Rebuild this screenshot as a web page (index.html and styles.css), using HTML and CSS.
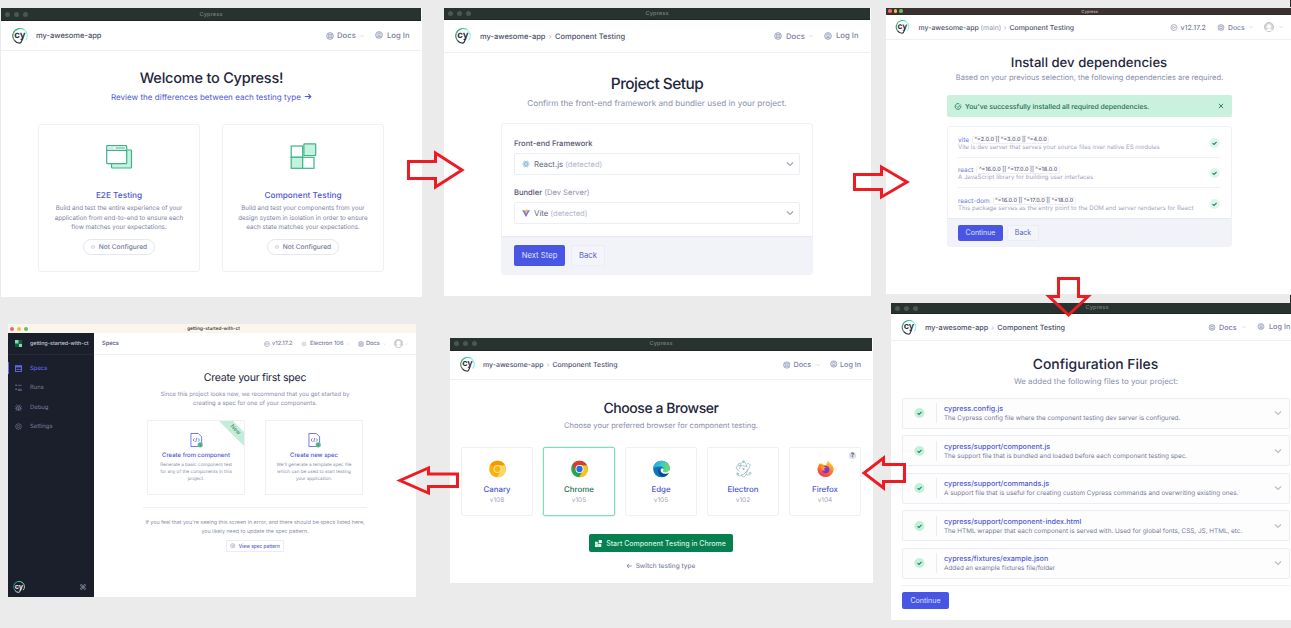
FILE: index.html
```html
<!DOCTYPE html>
<html lang="en">
<head>
<meta charset="utf-8">
<title>Cypress component testing setup flow</title>
<link rel="stylesheet" href="styles.css">
</head>
<body>
<svg class="defs" width="0" height="0" aria-hidden="true">
  <defs>
    <linearGradient id="ring" x1="0" y1="0" x2="1" y2="0.3"><stop offset="0" stop-color="#2e8f78"/><stop offset="0.6" stop-color="#3ccf9f"/><stop offset="1" stop-color="#8ff0d0"/></linearGradient>
    <linearGradient id="viteg" x1="0" y1="0" x2="0.6" y2="1"><stop offset="0" stop-color="#41a8ff"/><stop offset="1" stop-color="#a840e8"/></linearGradient>
    <linearGradient id="edgeg" x1="0" y1="0" x2="1" y2="0.3"><stop offset="0" stop-color="#1b9de2"/><stop offset="0.5" stop-color="#36c6d0"/><stop offset="1" stop-color="#66e060"/></linearGradient>
    <linearGradient id="foxg" x1="0.8" y1="0" x2="0.3" y2="1"><stop offset="0" stop-color="#ffe040"/><stop offset="0.45" stop-color="#ff8a1e"/><stop offset="1" stop-color="#f0305a"/></linearGradient>
    <symbol id="cy" viewBox="0 0 16 16">
      <path d="M2.400 12.400A7.200 7.200 0 0 1 1.200 5.500" fill="none" stroke="#46806f" stroke-width="1.200"/>
      <path d="M1.200 5.500A7.200 7.200 0 0 1 12.600 2.100" fill="none" stroke="url(#ring)" stroke-width="1.300"/>
      <path d="M12.600 2.100A7.200 7.200 0 0 1 13.600 12.300" fill="none" stroke="#9beeda" stroke-width="1.200"/>
      <path d="M2.400 12.400Q4.500 15.200 7.800 15.200Q9.300 14.800 10 12.200L10.800 10" fill="none" stroke="currentColor" stroke-width="1.300"/>
      <text x="7.800" y="10" text-anchor="middle" font-size="9.600" font-weight="700" fill="currentColor" letter-spacing="-.2">cy</text>
    </symbol>
    <symbol id="docs" viewBox="0 0 16 16"><g fill="none" stroke="currentColor" stroke-width="1.500"><circle cx="8" cy="8" r="6.800" fill="#e1e3ed"/><circle cx="8" cy="8" r="2.700" fill="#fff"/><path d="M3.200 3.200l3 3M12.800 3.200l-3 3M3.200 12.800l3-3M12.800 12.800l-3-3"/></g></symbol>
    <symbol id="user" viewBox="0 0 16 16"><g fill="none" stroke="currentColor" stroke-width="1.500"><circle cx="8" cy="8" r="6.800" fill="#e1e3ed"/><circle cx="8" cy="6.500" r="2.500" fill="#fff"/><path d="M3.500 12.500Q8 8.500 12.500 12.500"/></g></symbol>
    <symbol id="ver" viewBox="0 0 16 16"><g fill="none" stroke="currentColor" stroke-width="1.600"><circle cx="8" cy="8" r="6.800"/><path d="M7.500 6A2.200 2.200 0 1 0 7.500 10M8.500 6l1.500 3.500L11.800 6"/></g></symbol>
    <symbol id="down" viewBox="0 0 8 8"><path d="M1 2.500L4 5.500 7 2.500" fill="none" stroke="currentColor" stroke-width="1.200"/></symbol>
    <symbol id="check" viewBox="0 0 12 12"><circle cx="6" cy="6" r="6" fill="var(--disc)"/><path d="M3.600 6.100L5.400 7.700 8.500 4.600" fill="none" stroke="#1b8a5c" stroke-width="1.400"/></symbol>
    <symbol id="avatar" viewBox="0 0 12 12"><circle cx="6" cy="6" r="5.500" fill="#d4d4d8" stroke="#c0c0c6" stroke-width="1"/><circle cx="6" cy="5.300" r="2.700" fill="#fff"/><path d="M2.300 9.800Q3.500 8 6 8T9.700 9.800Q6 12 2.300 9.800z" fill="#fff"/></symbol>
    <symbol id="gear" viewBox="0 0 16 16"><g fill="none" stroke="currentColor" stroke-width="1.500"><path d="M8 1.200l1.800 1.500 2.300-.2.600 2.200 2 1.200L13.800 8l.9 2.100-2 1.200-.6 2.200-2.300-.2L8 14.800l-1.800-1.500-2.300.2-.6-2.200-2-1.200L2.200 8l-.9-2.100 2-1.200.6-2.200 2.300.2z"/><circle cx="8" cy="8" r="2.500"/></g></symbol>
    <symbol id="file" viewBox="0 0 14 16"><path d="M1 1h8l3.500 3.500V15H1z" fill="#fff" stroke="#6a72ec" stroke-width="1"/><path d="M4.800 6.200L3.300 8l1.500 1.800M8.700 6.200L10.200 8 8.700 9.800M7.300 5.800L6.200 10.200" fill="none" stroke="#5a63ea" stroke-width=".8"/><circle cx="11" cy="13.200" r="2.800" fill="#62bd93"/><path d="M11 11.700v3" stroke="#26785a" stroke-width=".8"/></symbol>
    <symbol id="atom" viewBox="0 0 20 20"><g fill="none" stroke="currentColor"><ellipse cx="10" cy="10" rx="8.600" ry="3.400"/><ellipse cx="10" cy="10" rx="8.600" ry="3.400" transform="rotate(60 10 10)"/><ellipse cx="10" cy="10" rx="8.600" ry="3.400" transform="rotate(120 10 10)"/></g><circle cx="10" cy="10" r="1.300" fill="currentColor"/></symbol>
    <symbol id="electron" viewBox="0 0 20 20"><g fill="none" stroke="currentColor" stroke-width=".9"><path d="M14.500 7.500C9 5.500 2.500 5.300 1.500 7.500 1 8.800 2.500 10.800 5 12.700"/><path d="M14.500 4C18 3.500 18.500 5.500 17 8.500 14.800 13 8.500 18 5 18 3.300 18 2.900 16.500 3.600 14.500" transform="rotate(-2 10 10)"/><path d="M5.500 10C6.300 4.500 8.300 1 10 1c1.600 0 3 2.500 3.800 6"/><path d="M7 16.300C8 18.300 9 19.200 10 19.200c2.200 0 4.300-4 4.500-9"/><path d="M3.700 5.500C3.500 3.500 4.500 2.800 6.500 3.500M13 16.300c2 1 3.700 1 4.300.2"/><circle cx="17.800" cy="15" r="1.100"/><circle cx="3" cy="15.800" r="1.100"/><circle cx="10" cy="1.500" r="1"/></g><circle cx="10" cy="10" r="1.200" fill="currentColor"/></symbol>
  </defs>
</svg>

<main class="board">

  <section class="win w1">
    <div class="bar"><i></i><i></i><i></i><span>Cypress</span></div>
    <header class="head">
      <svg class="logo"><use href="#cy"/></svg><b class="crumb">my-awesome-app</b>
      <nav class="tools"><svg class="ic"><use href="#docs"/></svg><span class="docs">Docs</span><svg class="chev"><use href="#down"/></svg><svg class="ic up"><use href="#user"/></svg><span class="login up">Log In</span></nav>
    </header>
    <h1>Welcome to Cypress!</h1>
    <p class="sub link">Review the differences between each testing type <svg viewBox="0 0 10 8"><path d="M1 4h7.500M5.500 1l3 3-3 3" fill="none" stroke="currentColor" stroke-width="1.400"/></svg></p>
    <div class="types">
      <article>
        <svg class="pic" viewBox="0 0 26 26"><g stroke="#3cb487" stroke-width="1.200"><rect x="5.500" y="7" width="20" height="18" rx=".8" fill="#c4f2de"/><rect x=".7" y="2.700" width="20" height="18" rx=".8" fill="#fff"/><path d="M.7 7.300h20M9.500 5h9.500" fill="none"/><path d="M2.500 5h5" stroke-dasharray="1 1" fill="none"/></g></svg>
        <h2>E2E Testing</h2>
        <p>Build and test the entire experience of your<br>application from end-to-end to ensure each<br>flow matches your expectations.</p>
        <span class="pill"><i></i>Not Configured</span>
      </article>
      <article>
        <svg class="pic" viewBox="-.5 0 26 26"><g stroke="#3cb487" stroke-width="1.200"><rect x=".7" y="3" width="11.500" height="11.300" fill="#fff"/><rect x=".7" y="14.300" width="11.500" height="11" fill="#c4f2de"/><rect x="12.200" y="14.300" width="11.300" height="11" fill="#fff"/><rect x="13.400" y=".8" width="11.800" height="11.700" rx=".6" fill="#c4f2de"/></g></svg>
        <h2>Component Testing</h2>
        <p>Build and test your components from your<br>design system in isolation in order to ensure<br>each state matches your expectations.</p>
        <span class="pill"><i></i>Not Configured</span>
      </article>
    </div>
  </section>

  <section class="win w2">
    <div class="bar"><i></i><i></i><i></i><span>Cypress</span></div>
    <header class="head">
      <svg class="logo"><use href="#cy"/></svg><b class="crumb">my-awesome-app</b><em class="sep">›</em><b class="crumb2">Component Testing</b>
      <nav class="tools"><svg class="ic"><use href="#docs"/></svg><span class="docs">Docs</span><svg class="chev"><use href="#down"/></svg><svg class="ic up"><use href="#user"/></svg><span class="login up">Log In</span></nav>
    </header>
    <h1>Project Setup</h1>
    <p class="sub">Confirm the front-end framework and bundler used in your project.</p>
    <div class="panel">
      <div class="fields">
        <label>Front-end Framework</label>
        <div class="select"><svg class="mark react"><use href="#atom"/></svg><span>React.js</span><small>(detected)</small><svg class="caret"><use href="#down"/></svg></div>
        <label>Bundler <span>(Dev Server)</span></label>
        <div class="select"><svg class="mark" viewBox="0 0 16 16"><path d="M0 2L8 16 16 2 8 3.500z" fill="url(#viteg)"/><path d="M6 1.500l5-1-1 5 1.500-.3-4 7 .8-5-2 .4z" fill="#ffc628"/></svg><span>Vite</span><small>(detected)</small><svg class="caret"><use href="#down"/></svg></div>
      </div>
      <footer><button class="primary">Next Step</button><button class="plain">Back</button></footer>
    </div>
  </section>

  <section class="win w3">
    <div class="bar lit"><i></i><i></i><i></i><span>Cypress</span></div>
    <header class="head">
      <svg class="logo"><use href="#cy"/></svg><b class="crumb">my-awesome-app <span>(main)</span></b><em class="sep">›</em><b class="crumb2">Component Testing</b>
      <nav class="tools"><svg class="ic"><use href="#ver"/></svg><span class="ver">v12.17.2</span><svg class="ic"><use href="#docs"/></svg><span class="docs">Docs</span><svg class="chev"><use href="#down"/></svg><svg class="face"><use href="#avatar"/></svg><svg class="chev"><use href="#down"/></svg></nav>
    </header>
    <h1>Install dev dependencies</h1>
    <p class="sub">Based on your previous selection, the following dependencies are required.</p>
    <div class="alert"><svg class="ok" viewBox="0 0 10 10"><g fill="none" stroke="#1c7a55" stroke-width="1.200"><path d="M9 4.200A4.100 4.100 0 1 1 6.800 1.300"/><path d="M3.200 4.700l1.700 1.700L8.800 2.200"/></g></svg><span>You've successfully installed all required dependencies.</span><svg class="x" viewBox="0 0 8 8"><path d="M1.200 1.200l5.600 5.600M6.800 1.200L1.200 6.800" fill="none" stroke="#1c7a55" stroke-width="1.200"/></svg></div>
    <div class="panel">
      <ul>
        <li><div><strong>vite</strong><code>^=2.0.0 || ^=3.0.0 || ^=4.0.0</code><p>Vite is dev server that serves your source files over native ES modules</p></div><svg class="tick"><use href="#check"/></svg></li>
        <li><div><strong>react</strong><code>^=16.0.0 || ^=17.0.0 || ^=18.0.0</code><p>A JavaScript library for building user interfaces</p></div><svg class="tick"><use href="#check"/></svg></li>
        <li><div><strong>react-dom</strong><code>^=16.0.0 || ^=17.0.0 || ^=18.0.0</code><p>This package serves as the entry point to the DOM and server renderers for React</p></div><svg class="tick"><use href="#check"/></svg></li>
      </ul>
      <footer><button class="primary">Continue</button><button class="plain">Back</button></footer>
    </div>
  </section>

  <section class="win w4">
    <div class="bar"><i></i><i></i><i></i><span>Cypress</span></div>
    <header class="head">
      <svg class="logo"><use href="#cy"/></svg><b class="crumb">my-awesome-app</b><em class="sep">›</em><b class="crumb2">Component Testing</b>
      <nav class="tools"><svg class="ic"><use href="#docs"/></svg><span class="docs">Docs</span><svg class="chev"><use href="#down"/></svg><svg class="ic up"><use href="#user"/></svg><span class="login up">Log In</span></nav>
    </header>
    <h1>Configuration Files</h1>
    <p class="sub">We added the following files to your project:</p>
    <ul class="files">
      <li><svg class="tick"><use href="#check"/></svg><div><h3>cypress.config.js</h3><p>The Cypress config file where the component testing dev server is configured.</p></div><svg class="caret"><use href="#down"/></svg></li>
      <li><svg class="tick"><use href="#check"/></svg><div><h3>cypress/support/component.js</h3><p>The support file that is bundled and loaded before each component testing spec.</p></div><svg class="caret"><use href="#down"/></svg></li>
      <li><svg class="tick"><use href="#check"/></svg><div><h3>cypress/support/commands.js</h3><p>A support file that is useful for creating custom Cypress commands and overwriting existing ones.</p></div><svg class="caret"><use href="#down"/></svg></li>
      <li><svg class="tick"><use href="#check"/></svg><div><h3>cypress/support/component-index.html</h3><p>The HTML wrapper that each component is served with. Used for global fonts, CSS, JS, HTML, etc.</p></div><svg class="caret"><use href="#down"/></svg></li>
      <li><svg class="tick"><use href="#check"/></svg><div><h3>cypress/fixtures/example.json</h3><p>Added an example fixtures file/folder</p></div><svg class="caret"><use href="#down"/></svg></li>
    </ul>
    <footer><button class="primary">Continue</button></footer>
  </section>

  <section class="win w5">
    <div class="bar"><i></i><i></i><i></i><span>Cypress</span></div>
    <header class="head">
      <svg class="logo"><use href="#cy"/></svg><b class="crumb">my-awesome-app</b><em class="sep">›</em><b class="crumb2">Component Testing</b>
      <nav class="tools"><svg class="ic"><use href="#docs"/></svg><span class="docs">Docs</span><svg class="chev"><use href="#down"/></svg><svg class="ic up"><use href="#user"/></svg><span class="login up">Log In</span></nav>
    </header>
    <h1>Choose a Browser</h1>
    <p class="sub">Choose your preferred browser for component testing.</p>
    <div class="browsers">
      <article><svg viewBox="0 0 20 20"><circle cx="10" cy="10" r="9.800" fill="#f8b10a"/><path d="M10 5.500h8.700A9.800 9.800 0 0 1 9.500 19.800L14 12z" fill="#ffd560"/><path d="M1.600 5A9.800 9.800 0 0 1 18.700 5.500H10L6 8z" fill="#f29a00"/><circle cx="10" cy="10" r="4.600" fill="#ffe7a0"/><circle cx="10" cy="10" r="3.600" fill="#f7b21b"/></svg><h3>Canary</h3><p>v108</p></article>
      <article class="on"><svg viewBox="0 0 20 20"><circle cx="10" cy="10" r="9.800" fill="#2ba24c"/><path d="M10 5.500h8.700A9.800 9.800 0 0 1 9.500 19.800L14 12z" fill="#fcc31e"/><path d="M1.600 5A9.800 9.800 0 0 1 18.700 5.500H10L6 12z" fill="#dd3b2d"/><circle cx="10" cy="10" r="4.700" fill="#fff"/><circle cx="10" cy="10" r="3.700" fill="#1a70e6"/></svg><h3>Chrome</h3><p>v105</p></article>
      <article><svg viewBox="0 0 20 20"><circle cx="10" cy="10" r="9.800" fill="#1273bd"/><path d="M.3 9.500A9.800 9.800 0 0 1 19.800 9C20 12.500 17 14 14 13.700c-2-.2-2.700-1.200-1.700-2.200C13.500 9.500 11.500 7.300 8.500 7.200 4.500 7 1 8.500.3 9.500z" fill="url(#edgeg)"/><path d="M7.500 9C4.500 12 7 18.500 12.500 19.200 15.500 18.500 17.500 16.500 18.600 14.700 14 17 8 15.500 8.500 10.500z" fill="#0d4a96"/><path d="M12.300 11.500c-1 1-.3 2 1.700 2.200 2.300.2 4.500-.5 5.800-2.700L20 13.500 18.600 14.700C14.500 16.500 9 15.500 9 11.500c0-1.500 1-2.500 2-2.500 1.200 0 2 1.500 1.300 2.500z" fill="#fff"/></svg><h3>Edge</h3><p>v105</p></article>
      <article><svg class="electron"><use href="#electron"/></svg><h3>Electron</h3><p>v102</p></article>
      <article><svg viewBox="0 0 20 20"><path d="M1.500 7C1.800 5 3 3.500 3.800 3l.4 1.700 2-1.500L6.500 5 11 5.200C11 3 12.500 1 14 0c0 2.500 1.500 3 3 4.500 2 2 2.800 4.500 2.500 7A9.600 9.600 0 0 1 .5 11c0-1.500.3-3 1-4z" fill="url(#foxg)"/><circle cx="10.300" cy="10.800" r="4.200" fill="#8434d8"/><path d="M4 7.500c2-1.500 5-.8 6.500.8L8.500 9.500 9 12c-2 .3-4.500-1.500-5-4.500z" fill="#ff9a28"/></svg><h3>Firefox</h3><p>v104</p><span class="help">?</span></article>
    </div>
    <button class="start"><svg viewBox="0 0 10 10"><path d="M0 2.500h4v3h5V10H0z" fill="#d7f5e6"/><rect x="5.300" width="4.500" height="4.300" fill="#fff"/><path d="M4.500 6v4M0 6h4" stroke="#5cb891" stroke-width=".6"/></svg>Start Component Testing in Chrome</button>
    <p class="switch"><svg viewBox="0 0 8 8"><path d="M7.500 4h-6M4 1.200L1.200 4 4 6.800" fill="none" stroke="currentColor" stroke-width="1.200"/></svg>Switch testing type</p>
  </section>

  <section class="win w6">
    <div class="bar lit"><i></i><i></i><i></i><span>getting-started-with-ct</span></div>
    <div class="split">
      <aside>
        <div class="proj"><svg viewBox="0 0 8 8"><rect width="8" height="8" fill="#185a3b"/><rect width="4" height="4" fill="#7be0ac"/><rect x="4.500" y="4.500" width="3.500" height="3.500" fill="#7be0ac"/></svg><b>getting-started-with-ct</b></div>
        <a class="on"><svg viewBox="0 0 8 8"><rect x=".6" y=".8" width="6.800" height="6.600" fill="none" stroke="#6470f3"/><path d="M.6 2h6.800" stroke="#6470f3" stroke-width="1.500"/><path d="M2 5h1M4 5h1M5.800 5h.7" stroke="#b8bdf8"/></svg>Specs</a>
        <a><svg viewBox="0 0 8 8"><path d="M.5 1.500h1.500M.5 6h1.500" stroke="currentColor" stroke-width="1.600"/><path d="M3.200 1.500h4.500M3.200 6h4.500M3.200 7.300h4.500" stroke="currentColor" stroke-width=".8"/></svg>Runs</a>
        <a><svg viewBox="0 0 8 8"><g fill="none" stroke="currentColor" stroke-width=".8"><ellipse cx="4" cy="4.800" rx="1.900" ry="2.600"/><path d="M2.800 2.500L2 .7M5.200 2.500L6 .7M2 4L.4 2.800M6 4l1.600-1.200M2 5H.2M6 5h1.800M2.300 6.200L.8 7.600M5.700 6.200l1.500 1.400M4 3.500v3.800"/></g></svg>Debug</a>
        <a><svg><use href="#gear"/></svg>Settings</a>
        <div class="foot"><svg class="logo"><use href="#cy"/></svg><svg class="cmd" viewBox="0 0 8 8"><path d="M3 1.800A1.200 1.200 0 1 0 1.800 3H6.200A1.200 1.200 0 1 0 5 1.800V6.200A1.200 1.200 0 1 0 6.200 5H1.800A1.200 1.200 0 1 0 3 6.200z" fill="none" stroke="#8f94ab" stroke-width=".9"/></svg></div>
      </aside>
      <div class="page">
        <header class="head"><b class="crumb">Specs</b>
          <nav class="tools"><svg class="ic"><use href="#ver"/></svg><span class="ver">v12.17.2</span><svg class="ic pale"><use href="#atom"/></svg><span class="elec">Electron 106</span><svg class="chev"><use href="#down"/></svg><svg class="ic"><use href="#docs"/></svg><span class="docs">Docs</span><svg class="chev"><use href="#down"/></svg><svg class="face"><use href="#avatar"/></svg><svg class="chev"><use href="#down"/></svg></nav>
        </header>
        <h1>Create your first spec</h1>
        <p class="sub">Since this project looks new, we recommend that you get started by<br>creating a spec for one of your components.</p>
        <div class="options">
          <article><span class="ribbon">New</span><svg><use href="#file"/></svg><h3>Create from component</h3><p>Generate a basic component test<br>for any of the components in this<br>project.</p></article>
          <article><svg><use href="#file"/></svg><h3>Create new spec</h3><p>We'll generate a template spec file<br>which can be used to start testing<br>your application.</p></article>
        </div>
        <p class="note">If you feel that you're seeing this screen in error, and there should be specs listed here,<br>you likely need to update the spec pattern.</p>
        <button class="pattern"><svg><use href="#gear"/></svg>View spec pattern</button>
      </div>
    </div>
  </section>

  <i class="edge e1"></i><i class="edge e2"></i>
  <svg class="arrows" width="1291" height="628" viewBox="0 0 1291 628" fill="none" stroke="#ed1c24" stroke-width="3">
    <path d="M408.500 161.500H435.500V153L462 170 435.500 187V178.500H408.500z"/>
    <path d="M854.500 174.500H881.500V167L907 182 881.500 197V189.500H854.500z"/>
    <path d="M1058.500 278.500H1078.500V296.500H1088L1068.500 315 1049 296.500H1058.500z"/>
    <path d="M904.500 464.500H883.500V458L864 473 883.500 488V481.500H904.500z"/>
    <path d="M457.500 474H428.500V468L400 480.500 428.500 493V486.500H457.500z"/>
  </svg>
</main>
</body>
</html>
```
FILE: styles.css
```css
* { box-sizing: border-box; margin: 0; padding: 0; }
body { background: #ebebeb; font-family: Inter, "Liberation Sans", sans-serif; text-rendering: geometricPrecision; color: #2e3247; overflow: hidden; }
.defs { position: absolute; }
.board { position: relative; width: 1291px; height: 628px; overflow: hidden; }
.board svg { display: block; flex: none; overflow: visible; }
button { font: inherit; border: 0; }
ul { list-style: none; }
h1, h2, h3, b, strong { font-weight: 500; }
h1, h2, h3, p, span, b, label, button, strong, code { white-space: nowrap; }

/* windows placed on the canvas */
.win { position: absolute; background: #fff; display: flex; flex-direction: column; color: #5a5f7a; }
.w1 { left: 1px; top: 8px; width: 421px; height: 289px; }
.w2 { left: 444px; top: 8px; width: 427px; height: 288px; }
.w3 { left: 886px; top: 8px; width: 405px; height: 286px; }
.w4 { left: 891px; top: 303px; width: 400px; height: 317px; }
.w5 { left: 450px; top: 338px; width: 423px; height: 245px; }
.w6 { left: 8px; top: 324px; width: 408px; height: 273px; }

.bar { flex: none; display: flex; align-items: center; gap: 4px; padding-left: 4px; height: 12px; margin-right: 1px; background: #28322f; border-bottom: 1px solid #1f2725; }
.bar i { width: 5px; height: 5px; border-radius: 50%; background: #4c5654; }
.bar span { flex: 1; text-align: center; margin-right: 27px; margin-left: -4px; font-size: 5.600px; font-weight: 600; color: #6e7875; letter-spacing: .1px; }
.bar.lit i:nth-child(1) { background: #ee6a5f; }
.bar.lit i:nth-child(2) { background: #f5bd4f; }
.bar.lit i:nth-child(3) { background: #5fc454; }

.head { flex: none; display: flex; align-items: center; border-bottom: 1px solid #eeeff4; margin-right: 1px; font-size: 7.500px; color: #4b5069; }
.head .logo { width: 16px; height: 16px; color: #2b3243; }
.crumb, .crumb2 { font-weight: 500; }
.crumb span { font-weight: 400; color: #9095ad; }
.sep { font-style: normal; text-align: center; color: #b5b8c8; }
.tools { margin-left: auto; display: flex; align-items: center; color: #7b80a0; font-weight: 500; }
.ic { width: 8px; height: 8px; color: #9398b6; }
.chev { width: 4px; height: 4px; color: #c3c6d4; }
.up { position: relative; top: -.4px; }

h1 { color: #23263b; text-align: center; }
.sub { text-align: center; color: #8a8fab; }
.primary { background: #4956e3; color: #dfe2fb; border-radius: 2px; }
.plain { color: #5a62c8; border: 1px solid #ebecf4; border-radius: 2px; background: #f4f5fa; }

/* testing type */
.w1 .bar { height: 13px; }
.w1 .bar span { padding-top: 1px; }
.w1 .head { height: 30px; padding-left: 11px; padding-right: 12px; }
.w1 .crumb { margin-left: 8px; font-size: 7.500px; }
.w1 .tools .docs { width: 19px; margin: 0 4px 0 3px; font-size: 7.700px; }
.w1 .tools .chev { margin-right: 11px; }
.w1 .login { margin-left: 4px; width: 22px; font-size: 7.700px; }
.w1 h1 { margin-top: 18px; line-height: 20px; font-size: 14.500px; letter-spacing: -.22px; }
.w1 .sub { margin-top: 1.500px; line-height: 12px; font-size: 8.050px; color: #4f59d6; display: flex; align-items: center; justify-content: center; gap: 3px; }
.w1 .sub svg { width: 8px; height: 7px; }
.types { display: flex; gap: 22px; padding-left: 37px; margin-top: 21.500px; }
.types article { width: 162px; height: 148px; border: 1px solid #eff0f5; border-radius: 3px; display: flex; flex-direction: column; align-items: center; text-align: center; padding-top: 18px; }
.pic { width: 26px; height: 26px; }
.types h2 { margin-top: 19.500px; font-size: 8.250px; line-height: 12px; color: #4d56cf; }
.types p { margin-top: 3.500px; font-size: 6.220px; line-height: 9.500px; color: #7c81a0; }
.pill { margin-top: 6px; height: 16px; width: 72px; border: 1px solid #e6e7f0; border-radius: 8px; display: flex; align-items: center; justify-content: center; gap: 4px; font-size: 6.600px; font-weight: 500; color: #73789a; }
.pill i { width: 4px; height: 4px; border-radius: 50%; border: 1px solid #d6d8e6; background: #eceef6; }

/* project setup */
.w2 .head { height: 33px; padding-left: 11px; padding-right: 12px; }
.w2 .crumb { margin-left: 9px; }
.w2 .sep { width: 9.500px; }
.w2 .docs { width: 19px; margin: 0 4px 0 4px; font-size: 7.700px; }
.w2 .tools .chev { margin-right: 11px; }
.w2 .login { margin-left: 4px; width: 22px; font-size: 7.700px; }
.w2 h1 { margin-top: 21px; margin-right: 1px; line-height: 20px; font-size: 15.400px; letter-spacing: -.5px; }
.w2 .sub { margin-top: 2.500px; margin-right: 1px; line-height: 12px; font-size: 8.200px; letter-spacing: .01px; }
.panel { border: 1px solid #f0f1f6; border-radius: 3px; overflow: hidden; }
.panel footer { display: flex; background: #f2f3f9; border-top: 1px solid #e7e9f4; }
.w2 .panel { margin: 14.500px 0 0 57px; width: 312px; height: 152px; display: flex; flex-direction: column; }
.fields { height: 112px; padding: 13px 12px 0; }
.w2 label { display: block; height: 16px; line-height: 13px; font-size: 7.600px; font-weight: 500; color: #50556e; }
.w2 label span { font-weight: 400; color: #9095ad; }
.select { display: flex; align-items: center; height: 22px; border: 1px solid #eceef4; border-radius: 2px; margin-bottom: 11px; padding: 0 5px 0 7px; font-size: 7.800px; color: #5a5f7a; }
.mark { width: 8px; height: 8px; margin-right: 4px; }
.react { color: #4f9ad6; }
.select small { font-size: 7.600px; color: #b3b7c9; margin-left: 2px; }
.caret { width: 8px; height: 8px; color: #a2a6bd; margin-left: auto; }
.w2 footer { flex: 1; padding: 8px 12px; gap: 6px; font-size: 7.700px; }
.w2 .primary { width: 51px; height: 21px; }
.w2 .plain { width: 34px; height: 21px; }

/* dependencies */
.w3 .bar { height: 7px; background: #3b3230; border-bottom-color: #342c2a; gap: 2px; padding-left: 2px; margin-right: 0; }
.w3 .bar i { width: 3.500px; height: 3.500px; }
.w3 .bar span { font-size: 4px; color: #b5afad; margin-right: 12px; }
.w3 .head { height: 25px; padding-left: 9px; padding-right: 8px; margin-right: 0; font-size: 6.920px; }
.w3 .logo { width: 15px; height: 14px; }
.w3 .crumb { margin-left: 8.500px; width: 82px; }
.w3 .sep { width: 9px; }
.w3 .ver { width: 27px; margin: 0 9.500px 0 3px; font-size: 7px; }
.w3 .docs { width: 17px; margin: 0 4px 0 3px; font-size: 6.800px; }
.w3 .ic { height: 7px; }
.w3 .face { width: 12px; height: 10px; margin: 0 4px 0 10px; }
.w3 h1 { margin-top: 14px; margin-left: 1px; line-height: 19px; font-size: 13.150px; }
.w3 .sub { margin-right: -2px; line-height: 10px; font-size: 7.520px; }
.alert { display: flex; align-items: center; margin: 12px 0 0 61px; width: 285px; height: 22px; border-radius: 2px; background: #caf0de; padding: 0 8px 0 7px; color: #24694d; font-size: 6.880px; font-weight: 500; }
.alert .ok { width: 8px; height: 7px; margin-right: 3px; }
.alert .x { width: 6px; height: 6px; margin-left: auto; }
.w3 .panel { margin: 9px 0 0 61px; width: 285px; height: 121px; }
.w3 ul { padding: 0 11px 0 10px; height: 91px; }
.w3 li { display: flex; align-items: center; justify-content: space-between; height: 30px; border-bottom: 1px solid #eff0f4; padding-top: 3px; }
.w3 li:first-child { height: 31px; }
.w3 li:last-child { border: 0; }
.w3 strong { font-size: 6.400px; color: #6b74e4; font-weight: 400; margin-right: 3px; }
.w3 li div { line-height: 8px; display: flex; flex-wrap: wrap; width: 245px; align-items: center; }
.w3 code { font: 500 5.500px/6px Inter, sans-serif; color: #5c6078; border: 1px solid #eeeff4; border-radius: 2px; padding: 0 1.500px; height: 8px; }
.w3 li p { width: 100%; font-size: 6.080px; line-height: 8px; color: #a2a6bd; }
.tick { width: 11px; height: 10px; --disc: #dcf6ea; }
.w3 li .tick { margin-bottom: 2px; }
.w3 footer { height: 30px; padding: 5.500px 10px; gap: 4px; font-size: 7px; }
.w3 .primary { width: 45px; height: 16px; }
.w3 .plain { width: 32px; height: 16px; }

/* configuration files */
.w4 .bar { height: 11px; margin-right: 0; }
.w4 .bar span { margin-right: 15px; }
.w4 .head { height: 27px; padding-left: 10px; margin-right: 0; font-size: 7.250px; }
.w4 .crumb { margin-left: 8px; }
.w4 .sep { width: 9px; }
.w4 .logo { height: 15px; }
.w4 .ic { height: 7px; }
.w4 .docs { width: 19px; margin: 0 4px 0 3px; }
.w4 .tools .chev { margin-right: 11px; }
.w4 .login { margin-left: 4px; width: 22px; }
.w4 h1 { margin-top: 14px; margin-left: 9px; line-height: 21px; font-size: 13.900px; }
.w4 .sub { margin-left: 10px; line-height: 10px; font-size: 7.900px; }
.files { margin: 11.500px 1px 0 11px; display: flex; flex-direction: column; gap: 6.600px; }
.files li { height: 31px; display: flex; align-items: center; border: 1px solid #ecedf4; border-radius: 2px; background: #fdfdfe; padding: 0 7px 0 11px; }
.files .tick { --disc: #c3f0dc; }
.files .caret { color: #b9bccd; }
.files div { margin-left: 11px; border-left: 1px solid #ebecf2; padding: 1px 0 0 7px; height: 20px; }
.files h3 { font-size: 7.200px; line-height: 10px; color: #4f5ad4; }
.files p { font-size: 6.370px; line-height: 9px; color: #767b95; }
.w4 footer { margin: 6px 1px 0 11px; border-top: 1px solid #eeeff3; padding-top: 6.500px; font-size: 7.100px; line-height: 17px; }
.w4 .primary { display: block; width: 47px; height: 17px; }

/* browsers */
.w5 .bar { height: 12.500px; }
.w5 .head { height: 29px; padding-left: 10px; padding-right: 11px; font-size: 6.950px; }
.w5 .logo { width: 15px; height: 15px; }
.w5 .crumb { margin-left: 8px; }
.w5 .sep { width: 9px; }
.w5 .docs { width: 18px; margin: 0 4px 0 3px; font-size: 7.200px; }
.w5 .tools .chev { margin-right: 10px; }
.w5 .login { margin-left: 3px; width: 21px; font-size: 7.200px; }
.w5 .ic { width: 7.500px; }
.w5 h1 { margin-top: 19px; margin-right: 1px; line-height: 20px; font-size: 14px; letter-spacing: -.45px; }
.w5 .sub { margin-top: 1px; margin-right: 1px; line-height: 12px; font-size: 7.500px; }
.browsers { display: flex; gap: 10px; margin: 15.500px 0 0 11px; }
.browsers article { position: relative; width: 72px; height: 69px; border: 1px solid #eff0f5; border-radius: 2px; padding-top: 12px; text-align: center; }
.browsers svg { width: 17px; height: 18px; margin: 0 auto; }
.browsers .on { border-color: #86dbb8; box-shadow: 0 0 0 .5px #b9eed8; }
.browsers h3 { margin-top: 5px; line-height: 12px; font-size: 7.900px; color: #4d56cf; }
.browsers .on h3 { color: #22704f; }
.browsers p { line-height: 10px; font-size: 6.500px; color: #a0a4bb; }
.browsers .electron { color: #86b5b9; }
.help { position: absolute; right: 4px; top: 4px; width: 7px; height: 7px; border-radius: 50%; background: #d9dbe8; font-size: 6px; line-height: 7px; font-weight: 700; color: #4b5069; }
.start { align-self: center; display: flex; align-items: center; justify-content: center; gap: 4px; margin: 18px 2px 0 0; width: 144px; height: 18px; background: #07804f; color: #d3efe2; border-radius: 2px; font-size: 7px; font-weight: 500; }
.start svg { width: 7px; height: 7px; }
.switch { display: flex; justify-content: center; align-items: center; gap: 4px; margin: 9px 2px 0 0; line-height: 10px; font-size: 6.500px; font-weight: 500; color: #7c81a0; }
.switch svg { width: 6px; height: 6px; }

/* first spec */
.w6 .bar { height: 9px; background: #fbf5ed; border: 0; gap: 3px; padding-left: 2px; margin-right: 0; }
.w6 .bar i { width: 4px; height: 4px; }
.w6 .bar span { font-size: 4.700px; color: #4b4644; font-weight: 600; letter-spacing: 0; margin-right: 16px; }
.split { flex: 1; display: flex; }
aside { width: 86px; background: #1b1e2b; display: flex; flex-direction: column; color: #767b95; font-size: 5.900px; }
.proj { height: 22px; border-bottom: 1px solid #262938; display: flex; align-items: center; padding-left: 7px; color: #c9cbd8; margin-bottom: 3px; }
.proj svg { width: 7px; height: 7px; margin-right: 8px; }
.proj b { font-size: 5.300px; }
aside a { display: flex; align-items: center; height: 12px; margin: 4px 0 3.600px; padding-left: 6px; border-left: 1px solid transparent; }
aside a svg { width: 7px; height: 7px; margin-right: 8px; }
aside a.on { color: #6470f3; border-color: #6470f3; }
.foot { margin-top: auto; display: flex; justify-content: space-between; align-items: center; padding: 0 8.500px 4px 4.500px; }
.foot .logo { width: 12px; height: 12px; color: #e3e5ee; }
.foot .cmd { width: 6px; height: 6px; }
.page { flex: 1; display: flex; flex-direction: column; }
.w6 .head { height: 22px; padding: 0 8px; font-size: 5.700px; margin-right: 0; }
.w6 .ic { width: 6px; height: 6px; }
.w6 .pale { color: #b9bccb; }
.w6 .ver { width: 21px; margin: 0 8px 0 2px; }
.w6 .elec { width: 33px; margin: 0 3px 0 3px; }
.w6 .elec + .chev { margin-right: 9px; }
.w6 .docs { width: 14px; margin: 0 3px 0 2px; }
.w6 .chev { width: 3px; }
.w6 .face { width: 9px; height: 9px; margin: 0 2px 0 8px; }
.w6 h1 { margin-top: 14px; line-height: 18px; font-size: 10.600px; font-weight: 400; letter-spacing: -.27px; }
.w6 .sub { margin-top: 2.500px; line-height: 9.500px; font-size: 5.920px; }
.options { display: flex; gap: 20px; margin: 11.500px auto 0; padding: 0 4px 12px; border-bottom: 1px solid #eff0f4; }
.options article { position: relative; overflow: hidden; width: 98px; height: 75px; border: 1px solid #eff0f5; text-align: center; padding-top: 11px; }
.options svg { width: 13px; height: 16px; margin: 0 auto; }
.options h3 { margin-top: 2px; line-height: 11px; font-size: 5.980px; color: #4d56cf; }
.options p { margin-top: 1px; line-height: 7px; font-size: 4.620px; color: #8a8fab; }
.ribbon { position: absolute; right: -13px; top: 4px; width: 44px; height: 10px; line-height: 10px; background: #c3edd9; color: #3e7d62; font-size: 5.500px; transform: rotate(45deg); }
.note { margin-top: 11px; text-align: center; line-height: 8.500px; font-size: 5.330px; color: #8a8fab; }
.pattern { align-self: center; display: flex; align-items: center; justify-content: center; gap: 3px; margin-top: 4px; width: 58px; height: 12px; background: #fff; border: 1px solid #ecedf3; font-size: 4.750px; font-weight: 500; color: #5a63cf; }
.pattern svg { width: 5.500px; height: 5.500px; color: #9095ad; }

/* canvas marks */
.edge { position: absolute; left: 1290px; width: 1px; background: #2b2a2c; }
.e1 { top: 0; height: 7px; }
.e2 { top: 295px; height: 8px; }
.arrows { position: absolute; left: 0; top: 0; }
```
